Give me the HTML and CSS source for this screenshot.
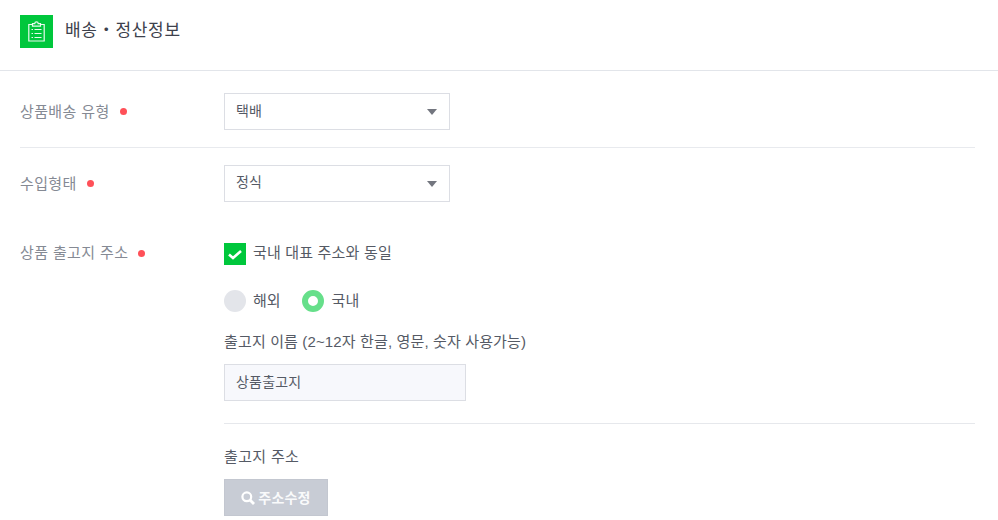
FILE: index.html
```html
<!DOCTYPE html>
<html lang="ko">
<head>
<meta charset="utf-8">
<title>배송・정산정보</title>
<link rel="stylesheet" href="styles.css">
</head>
<body>
<header class="head">
  <span class="head-icon">
    <svg width="19" height="21" viewBox="0 0 19 21" fill="none" stroke="#fff" stroke-opacity=".9" stroke-width="1.2">
      <path d="M5.5 3.500H1.800v16.500h15.400V3.500h-3.700"/>
      <path d="M5.500 5.200V2.600h2.300a1.700 1.700 0 0 1 3.400 0h2.300v2.600z"/>
      <path d="M4.500 8.500h1.500M7.500 8.500h7M4.500 12.500h1.500M7.500 12.500h7M4.500 16.500h1.500M7.500 16.500h7"/>
    </svg>
  </span>
  <h1 class="head-title">배송・정산정보</h1>
</header>
<main class="form">
  <section class="row row-type">
    <div class="label"><span>상품배송 유형</span><i class="dot"></i></div>
    <div class="select"><span>택배</span><i class="caret"></i></div>
  </section>
  <section class="row row-import">
    <div class="label"><span>수입형태</span><i class="dot"></i></div>
    <div class="select select-up"><span>정식</span><i class="caret"></i></div>
  </section>
  <section class="row row-addr">
    <div class="label label-addr"><span>상품 출고지 주소</span><i class="dot"></i></div>
    <div class="addr">
      <div class="check-line">
        <span class="check">
          <svg class="check-mark" width="16" height="14" viewBox="0 0 16 14" fill="none" stroke="#fff" stroke-width="2.600"><path d="M2 7.500l4 3.500 8-7"/></svg>
        </span>
        <span class="check-text">국내 대표 주소와 동일</span>
      </div>
      <div class="radio-line">
        <span class="radio-item"><i class="radio"></i><span>해외</span></span>
        <span class="radio-item"><i class="radio radio-on"></i><span>국내</span></span>
      </div>
      <div class="field-label">출고지 이름 (2~12자 한글, 영문, 숫자 사용가능)</div>
      <div class="input">상품출고지</div>
      <hr class="sep">
      <div class="field-label field-label-addr">출고지 주소</div>
      <div class="btn">
        <svg width="14" height="14" viewBox="0 0 14 14" fill="none" stroke="#fff" stroke-width="2.200"><circle cx="5.800" cy="5.800" r="4.400"/><path d="M9 9l4 4" stroke-width="2.800"/></svg>
        <span>주소수정</span>
      </div>
    </div>
  </section>
</main>
</body>
</html>
```
FILE: styles.css
```css
* { box-sizing: border-box; }
html, body { margin: 0; height: 520px; overflow: hidden; background: #fff; }
body {
  font-family: "Liberation Sans", "Noto Sans CJK KR", sans-serif;
  font-size: 15px;
  line-height: 20px;
  color: #555a65;
}
.head {
  height: 71px;
  padding: 15px 20px 0;
  display: flex;
  gap: 12px;
  border-bottom: 1px solid #e2e5ea;
}
.head-icon {
  width: 33px;
  height: 33px;
  background: #00c73c;
  display: flex;
  align-items: center;
  justify-content: center;
}
.head-title {
  margin: 0;
  font-size: 17px;
  font-weight: 400;
  line-height: 31px;
  letter-spacing: .7px;
  color: #3d414c;
}
.form { padding: 0 23px 0 20px; }
.row { display: flex; }
.row-type { padding: 22px 0 17px; border-bottom: 1px solid #e8eaee; }
.row-import { padding-top: 17px; }
.row-addr { padding-top: 41px; }
.label {
  width: 204px;
  height: 37px;
  display: flex;
  align-items: center;
  gap: 10px;
  letter-spacing: .38px;
  color: #858a94;
}
.label-addr { height: 20px; }
.dot {
  width: 7px;
  height: 7px;
  border-radius: 50%;
  background: #ff5058;
}
.select {
  width: 226px;
  height: 37px;
  padding: 0 12px 0 11px;
  border: 1px solid #dcdee4;
  background: #fff;
  display: flex;
  align-items: center;
  justify-content: space-between;
  font-size: 14px;
}
.select span { margin-top: -1px; }
.select-up span { margin-top: -3px; }
.caret {
  width: 0;
  height: 0;
  border-left: 5.500px solid transparent;
  border-right: 5.500px solid transparent;
  border-top: 6px solid #73767f;
}
.addr { width: 751px; }
.check-line {
  display: flex;
  align-items: center;
  gap: 7px;
  height: 22px;
}
.check-text { margin-top: -2px; letter-spacing: .18px; }
.check {
  width: 22px;
  height: 22px;
  background: #00c73c;
  display: flex;
  align-items: center;
  justify-content: center;
}
.radio-line {
  display: flex;
  gap: 21px;
  margin-top: 25px;
  height: 22px;
}
.radio-item { display: flex; align-items: center; gap: 7px; }
.radio {
  width: 22px;
  height: 22px;
  border-radius: 50%;
  background: #e3e5ea;
}
.radio-on { background: #fff; border: 6px solid #66df8a; margin-right: 1px; }
.field-label { margin-top: 20px; height: 20px; letter-spacing: .14px; }
.input {
  width: 242px;
  height: 37px;
  margin-top: 12px;
  padding: 0 11px;
  border: 1px solid #dcdee4;
  background: #f7f8fc;
  font-size: 14px;
  line-height: 35px;
  letter-spacing: .2px;
}
.sep { margin: 22px 0 0; border: 0; border-top: 1px solid #e6e8ec; }
.field-label-addr { margin-top: 23px; letter-spacing: .33px; }
.btn {
  width: 104px;
  height: 37px;
  margin-top: 12px;
  border: 1px solid #c3c7d0;
  background: #c8ccd5;
  color: rgba(255, 255, 255, .92);
  display: flex;
  align-items: center;
  justify-content: center;
  gap: 3px;
  font-size: 14px;
  font-weight: 700;
  letter-spacing: .2px;
}
```
